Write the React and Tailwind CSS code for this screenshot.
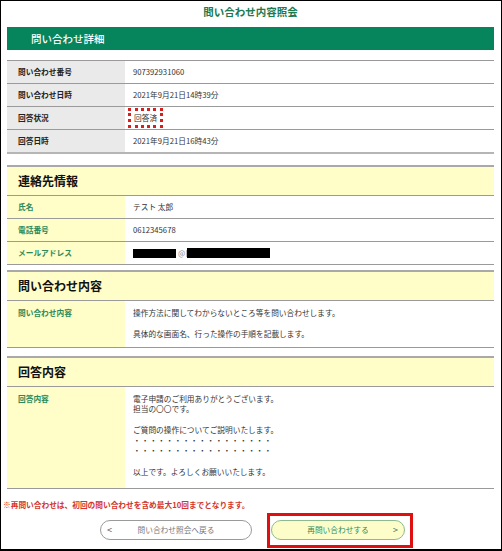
import React from "react";

const detailRows = [
    { label: "問い合わせ番号", value: "907392931060" },
    { label: "問い合わせ日時", value: "2021年9月21日14時39分" },
    { label: "回答状況", value: "回答済", marked: true },
    { label: "回答日時", value: "2021年9月21日16時43分" },
];

function DetailTable() {
    return (
        <div className="mt-[10px] border-b-2 border-[#b5b5b5]">
            {detailRows.map((row) => (
                <div key={row.label} className="flex h-[23px] border-t border-[#9a9a9a]">
                    <div className="w-[118px] bg-[#eaeaea] pl-[11px] flex items-center font-bold text-[#222]">
                        {row.label}
                    </div>
                    <div className="flex-1 pl-[8px] flex items-center text-[#333]">
                        {row.marked ? (
                            <span className="-ml-[5px] px-[3px] leading-[14px] border-[3px] border-dotted border-[#d62020]">
                                {row.value}
                            </span>
                        ) : (
                            row.value
                        )}
                    </div>
                </div>
            ))}
        </div>
    );
}

function Section({ title, className, children }) {
    return (
        <div className={`border-t-2 border-b border-t-[#a9a9a9] border-b-[#9a9a9a] ${className}`}>
            <div className="h-[28px] bg-[#fffdc8] pl-[11px] flex items-center text-[12px] font-bold text-[#111]">
                {title}
            </div>
            {children}
        </div>
    );
}

function Row({ label, children, tall }) {
    return (
        <div className={`flex border-t border-[#9a9a9a] ${tall ? "" : "h-[23px]"}`}>
            <div
                className={`w-[118px] bg-[#fffdc8] pl-[11px] flex font-bold text-[#2c8a5a] ${
                    tall ? "items-start pt-[7px] leading-[10.5px]" : "items-center"
                }`}
            >
                {label}
            </div>
            <div
                className={`flex-1 pl-[8px] text-[#333] ${
                    tall ? "leading-[10.5px]" : "flex items-center"
                }`}
            >
                {children}
            </div>
        </div>
    );
}

export default function App() {
    return (
        <div className="w-[502px] h-[551px] border border-b-2 border-black bg-white pl-[6px] pr-[7px] font-['Noto_Sans_CJK_JP',sans-serif] text-[7.7px] overflow-hidden">
            <h1 className="pt-[4px] text-center text-[10.5px] leading-[14px] font-bold text-[#1b7a4f]">
                問い合わせ内容照会
            </h1>

            <div className="mt-[8px] h-[23px] bg-[#06845b] pl-[24px] flex items-center text-[10.5px] text-white font-medium">
                問い合わせ詳細
            </div>

            <DetailTable />

            {/* contact info */}
            <Section title="連絡先情報" className="mt-[11px]">
                <Row label="氏名">テスト 太郎</Row>
                <Row label="電話番号">0612345678</Row>
                <Row label="メールアドレス">
                    <span className="w-[43px] h-[9px] bg-black" />
                    <span className="ml-[2px] text-[#888]">@</span>
                    <span className="w-[1px] h-[7px] bg-[#bbb] ml-[1px]" />
                    <span className="w-[83px] h-[10px] bg-black" />
                </Row>
            </Section>

            <Section title="問い合わせ内容" className="mt-[5px]">
                <Row label="問い合わせ内容" tall>
                    <div className="pt-[7px] pb-[7px]">
                        <p>操作方法に関してわからないところ等を問い合わせします。</p>
                        <p>&nbsp;</p>
                        <p>具体的な画面名、行った操作の手順を記載します。</p>
                    </div>
                </Row>
            </Section>

            <Section title="回答内容" className="mt-[8px]">
                <Row label="回答内容" tall>
                    <div className="pt-[7px] pb-[10px]">
                        <p>電子申請のご利用ありがとうございます。</p>
                        <p>担当の〇〇です。</p>
                        <p>&nbsp;</p>
                        <p>ご質問の操作についてご説明いたします。</p>
                        <p className="tracking-[0.5px]">・・・・・・・・・・・・・・・・・</p>
                        <p className="tracking-[0.5px]">・・・・・・・・・・・・・・・・・</p>
                        <p>&nbsp;</p>
                        <p>以上です。よろしくお願いいたします。</p>
                    </div>
                </Row>
            </Section>

            <p className="mt-[10px] -ml-[4px] leading-[12px] font-bold text-[#d4352b]">
                ※再問い合わせは、初回の問い合わせを含め最大10回までとなります。
            </p>

            <div className="mt-[2px] flex items-center">
                <button
                    type="button"
                    className="ml-[93px] w-[152px] h-[20px] rounded-full border border-[#9a9a9a] bg-white flex items-center text-[#777]"
                >
                    <span className="w-[18px] pl-[6px] text-left text-[9px] text-[#555]">&lt;</span>
                    <span className="flex-1 text-center">問い合わせ照会へ戻る</span>
                    <span className="w-[18px]" />
                </button>

                <div className="ml-[15px] border-[3px] border-[#e01010] pl-[1px] pr-[5px] pt-[4px] pb-[5px]">
                    <button
                        type="button"
                        className="w-[134px] h-[20px] rounded-full border border-[#8dbb8d] bg-[#fdfdc9] flex items-center text-[#2c8a5a]"
                    >
                        <span className="w-[18px]" />
                        <span className="flex-1 text-center">再問い合わせする</span>
                        <span className="w-[18px] pr-[6px] text-right text-[9px] text-[#3f6f55]">&gt;</span>
                    </button>
                </div>
            </div>
        </div>
    );
}
